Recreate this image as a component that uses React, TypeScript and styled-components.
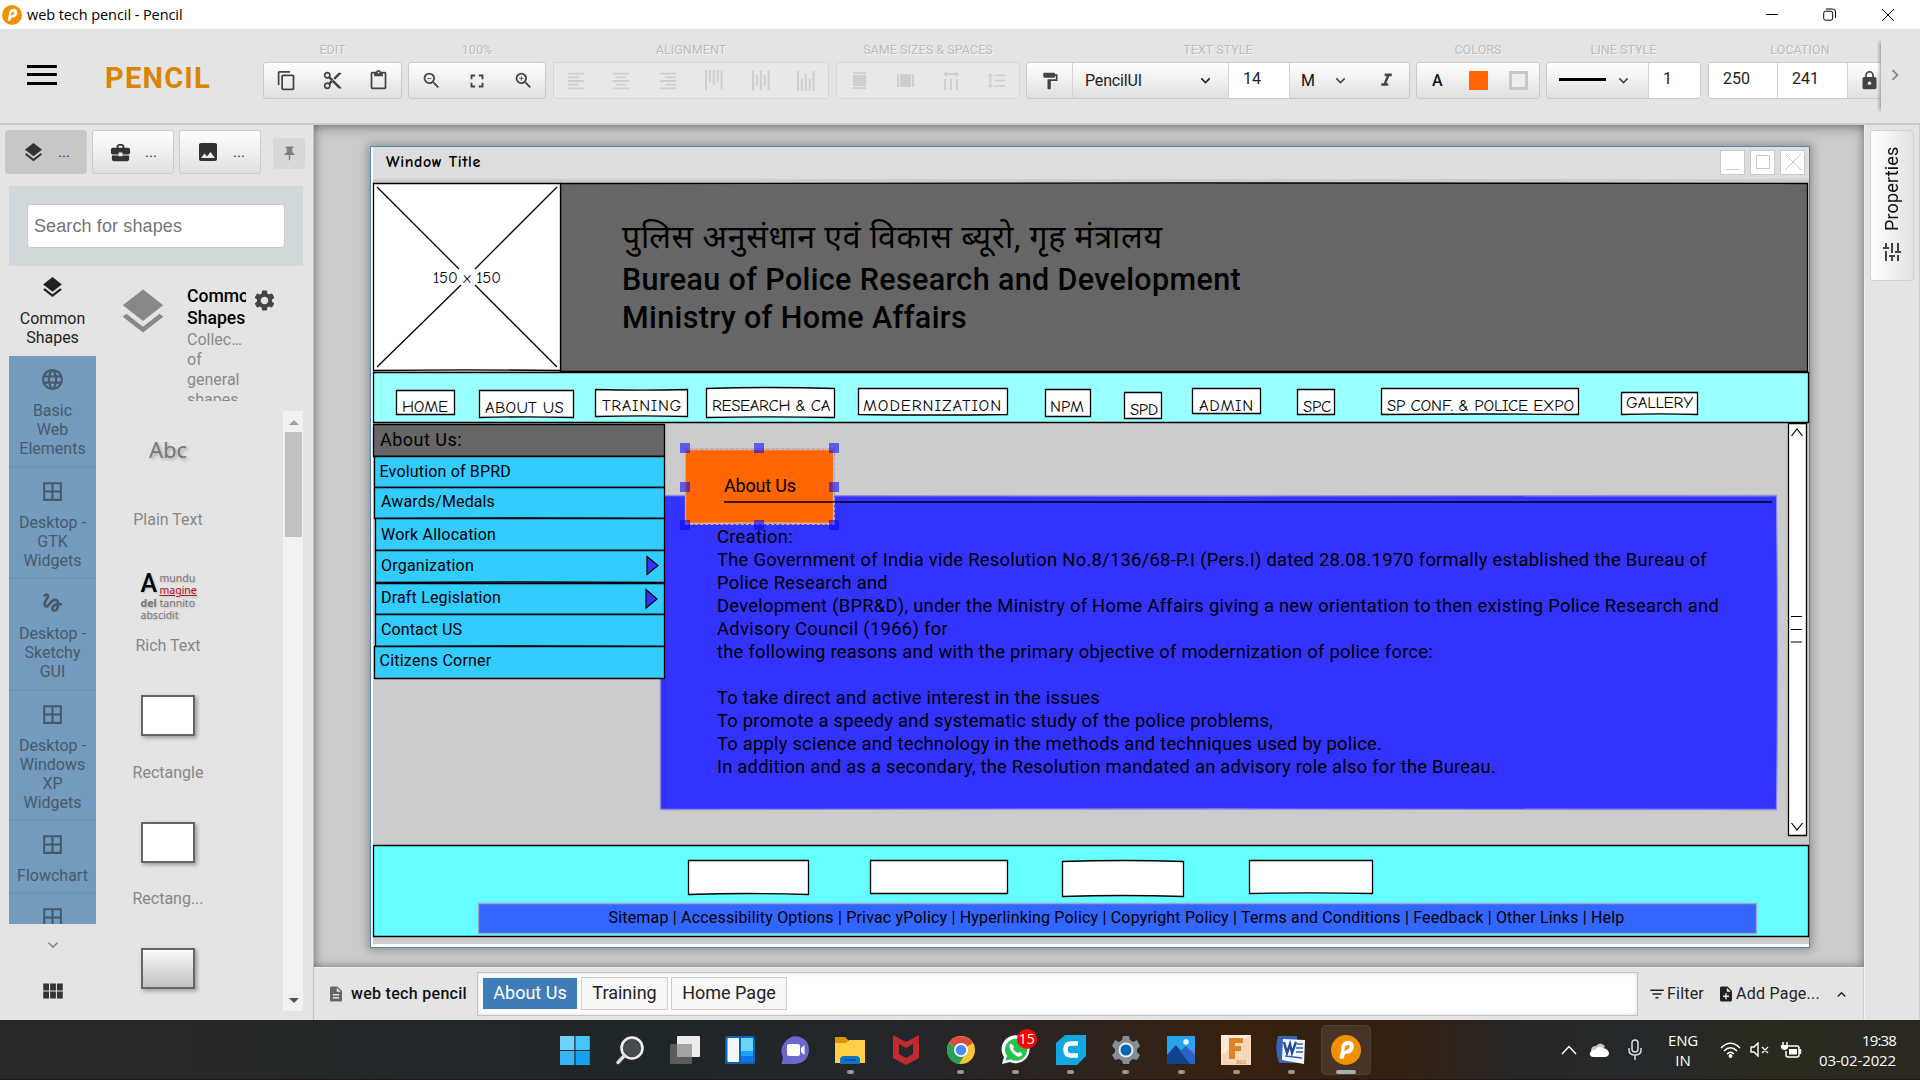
import React, { useLayoutEffect, useRef, useState } from "react";
import styled, { createGlobalStyle, css } from "styled-components";
import {
  MdLayers, MdContentCopy, MdContentCut, MdContentPaste, MdZoomOut, MdZoomIn, MdFullscreen,
  MdFormatAlignLeft, MdFormatAlignCenter, MdFormatAlignRight, MdFormatPaint, MdExpandMore, MdExpandLess,
  MdChevronRight, MdFormatItalic, MdLock, MdBusinessCenter, MdImage, MdPushPin, MdSettings, MdLanguage,
  MdBorderAll, MdGesture, MdViewModule, MdDescription, MdFilterList, MdNoteAdd, MdTune, MdFormatLineSpacing,
} from "react-icons/md";

const ui = `Roboto, "Noto Sans", sans-serif`;
const hand = `"Comic Sans MS", "Comic Neue", Lato, sans-serif`;
const system = `"Segoe UI", "Open Sans", "Noto Sans", sans-serif`;

const Global = createGlobalStyle`
  * { box-sizing: border-box; }
  body { margin: 0; background: #e4e4e4; font-family: ${ui}; color: #222; overflow: hidden; }
  svg { display: block; flex: none; }
`;

const Screen = styled.div`
  width: 1920px;
  height: 1080px;
  display: flex;
  flex-direction: column;
  background: #e4e4e4;
`;

/* ---------- text that keeps a stored width ---------- */
const FitSpan = styled.span`
  display: inline-block;
  white-space: pre;
`;

function Fit({ text, width }: { text: string; width: number }) {
  const ref = useRef<HTMLSpanElement>(null);
  const [gap, setGap] = useState(0);
  useLayoutEffect(() => {
    const natural = ref.current!.getBoundingClientRect().width;
    setGap((width - natural) / Array.from(text).length);
  }, [text, width]);
  return <FitSpan ref={ref} style={{ letterSpacing: gap }}>{text}</FitSpan>;
}

/* ---------- title bar ---------- */
const TitleBar = styled.header`
  height: 29px;
  flex: none;
  background: #fff;
  display: flex;
  align-items: center;
  padding: 0 25px 0 2px;
  font: 14.5px/28px ${system};
  color: #000;
`;
const TitleText = styled.div`
  margin-left: 5px;
  flex: 1;
`;
const WindowControls = styled.div`
  display: flex;
  gap: 44px;
`;

function PencilLogo({ size }: { size: number }) {
  return (
    <svg width={size} height={size} viewBox="0 0 30 30">
      <circle cx="15" cy="15" r="15" fill="#f29100" />
      <path d="M8.500 23 L10.500 14 Q10 9 13 7 Q19 4 22 8 Q24.500 13 20.500 17 Q18 19.500 14 19 L12.800 23 Q10.500 25 8.500 23Z" fill="#fff" />
      <path d="M14.200 11.500 Q17.500 9 18.500 11 Q18.800 14.500 13.200 16Z" fill="#f29100" />
    </svg>
  );
}

/* ---------- toolbar ---------- */
const Toolbar = styled.div`
  height: 96px;
  flex: none;
  display: flex;
  border-bottom: 2px solid #cbcbcb;
  padding-left: 27px;
`;
const Brand = styled.div`
  margin-left: 48px;
  width: 158px;
  padding-top: 31px;
  font: 700 29px/37px ${ui};
  color: #d98500;
`;
const Burger = styled.div`
  width: 30px;
  height: 20px;
  margin-top: 36px;
  border-top: 3px solid #000;
  border-bottom: 3px solid #000;
  padding-top: 5px;
  &::after { content: ""; display: block; height: 3px; background: #000; }
`;
const Groups = styled.div`
  display: flex;
  width: 1618px;
  margin-top: 11px;
  height: 73px;
  overflow: hidden;
`;
const Group = styled.section<{ $w: number; $gap: number }>`
  width: ${(p) => p.$w}px;
  margin-right: ${(p) => p.$gap}px;
  flex: none;
`;
const GroupLabel = styled.div`
  height: 22px;
  font: 12.6px/20px ${ui};
  text-align: center;
  color: #bcbcbc;
  text-shadow: 1px 1px 0 #f6f6f6;
`;
const GroupBox = styled.div<{ $off?: boolean }>`
  display: flex;
  height: 37px;
  border: 1px solid ${(p) => (p.$off ? "#d6d6d6" : "#cacaca")};
  border-radius: 3px;
  background: ${(p) => (p.$off ? "#e8e8e8" : "linear-gradient(#fff, #e0e0e0)")};
  color: ${(p) => (p.$off ? "#cfcfcf" : "#444")};
  overflow: hidden;
`;
const Cell = styled.div<{ $w?: number; $field?: boolean; $line?: boolean; $bold?: boolean }>`
  ${(p) => (p.$w ? `width: ${p.$w}px; flex: none;` : "flex: 1;")}
  display: flex;
  align-items: center;
  justify-content: center;
  font: ${(p) => (p.$bold ? 500 : 400)} 16px/1 ${ui};
  color: inherit;
  ${(p) => p.$field && css`background: #fff; color: #222; padding-bottom: 3px;`}
  ${(p) => p.$line && css`border-left: 1px solid #d2d2d2;`}
`;
const FontCell = styled(Cell)`
  justify-content: space-between;
  padding: 0 13px 0 12px;
  color: #222;
`;
const FieldText = styled(Cell)`
  justify-content: flex-start;
  padding-left: 14px;
`;
const Dark = styled.span`
  color: #111;
`;
const Swatch = styled.span<{ $fill?: string }>`
  width: 19px;
  height: 19px;
  background: ${(p) => p.$fill ?? "#eee"};
  border: ${(p) => (p.$fill ? "0" : "3px solid #c8c8c8")};
`;
const Stroke = styled.span`
  width: 47px;
  height: 3px;
  background: #000;
  margin: 0 8px 2px -4px;
`;
const MoreTools = styled.div`
  width: 39px;
  margin-top: 11px;
  height: 72px;
  padding: 24px 0 0 3px;
  color: #888;
  box-shadow: -3px 0 4px -2px rgba(0, 0, 0, 0.4);
  clip-path: inset(0 0 0 -4px);
`;

function Bars({ kind }: { kind: "top" | "middle" | "bottom" }) {
  const heights = { top: [20, 12, 15, 12, 20], middle: [20, 11, 20, 11, 20], bottom: [20, 12, 17, 12, 20] }[kind];
  return (
    <svg width="18" height="21" viewBox="0 0 18 21" fill="currentColor">
      {heights.map((h, i) => {
        const y = kind === "top" ? 0 : kind === "middle" ? (21 - h) / 2 : 21 - h;
        return <rect key={i} x={i * 3.9} y={y} width="2" height={h} />;
      })}
    </svg>
  );
}

/* ---------- work area ---------- */
const Work = styled.main`
  flex: 1;
  min-height: 0;
  display: flex;
`;
const Side = styled.aside`
  width: 314px;
  flex: none;
  border-right: 1px solid #c2c2c2;
  padding: 5px 10px 0 9px;
  display: flex;
  flex-direction: column;
`;
const SideTabs = styled.div`
  display: flex;
  gap: 5px;
  margin-left: -4px;
  height: 56px;
  flex: none;
`;
const SideTab = styled.div<{ $on?: boolean }>`
  width: 82px;
  flex: none;
  height: 44px;
  display: flex;
  align-items: center;
  gap: 13px;
  padding-left: 16px;
  border: 1px solid #cacaca;
  border-radius: 3px;
  color: #333;
  font-size: 15px;
  background: ${(p) => (p.$on ? "#c7c7c7" : "linear-gradient(#fff, #e0e0e0)")};
`;
const PinButton = styled.div`
  width: 32px;
  flex: none;
  height: 31px;
  margin: 8px 0 0 7px;
  display: grid;
  place-items: center;
  border-radius: 3px;
  background: #d8d8d8;
  color: #808080;
`;
const SearchBand = styled.div`
  height: 80px;
  flex: none;
  background: #d2d9dc;
  padding: 18px 18px 18px;
`;
const SearchBox = styled.div`
  height: 44px;
  border: 1px solid #c8c8c8;
  border-radius: 4px;
  background: #fff;
  font: 18px/42px "Liberation Sans", Arial, sans-serif;
  color: #757575;
  padding-left: 6px;
`;
const Collections = styled.div`
  display: flex;
  flex: 1;
  min-height: 0;
`;
const TabColumn = styled.div`
  width: 87px;
  display: flex;
  flex-direction: column;
  align-items: center;
`;
const TabList = styled.div`
  width: 87px;
  height: 658px;
  overflow: hidden;
`;
const CollectionTab = styled.div<{ $on?: boolean; $h: number }>`
  height: ${(p) => p.$h}px;
  display: flex;
  flex-direction: column;
  align-items: center;
  gap: 9px;
  padding-top: ${(p) => (p.$on ? 9 : 11)}px;
  font: 16px/19px ${ui};
  text-align: center;
  white-space: pre-line;
  color: ${(p) => (p.$on ? "#222" : "#475a6b")};
  background: ${(p) => (p.$on ? "transparent" : "#739bbe")};
  ${(p) => !p.$on && css`border-bottom: 2px solid #6d94b6;`}
`;
const ColumnIcon = styled.div<{ $h: number; $tone: string }>`
  height: ${(p) => p.$h}px;
  padding-left: 1px;
  display: grid;
  place-items: center;
  color: ${(p) => p.$tone};
`;
const ShapePane = styled.div`
  flex: 1;
  display: flex;
  flex-direction: column;
`;
const PaneHead = styled.div`
  height: 135px;
  padding: 19px 19px 0 20px;
  display: flex;
  overflow: hidden;
  color: #888;
`;
const PaneText = styled.div`
  width: 59px;
  height: 116px;
  flex: none;
  margin: 0 6px 0 17px;
  overflow: hidden;
  font: 16px/20px ${ui};
  white-space: pre;
  color: #8a8a8a;
`;
const PaneTitle = styled.div`
  font: 500 17.6px/22px ${ui};
  margin-bottom: 1px;
  color: #000;
`;
const GearHolder = styled.div`
  color: #444;
  padding-top: 3px;
`;
const ShapeScroller = styled.div`
  display: flex;
  margin-top: 10px;
  height: 600px;
`;
const ShapeList = styled.div`
  width: 144px;
  margin-right: 43px;
  display: flex;
  flex-direction: column;
  align-items: center;
  font: 16px/20px ${ui};
  color: #878787;
`;
const ShapeItem = styled.div<{ $h: number; $pic: number; $gap: number }>`
  height: ${(p) => p.$h}px;
  display: flex;
  flex-direction: column;
  align-items: center;
  & > :first-child { height: ${(p) => p.$pic}px; margin-bottom: ${(p) => p.$gap}px; flex: none; }
`;
const AbcThumb = styled.div`
  padding-top: 24px;
  font: 22px/28px "Noto Sans", sans-serif;
  color: #777;
  text-shadow: 2px 2px 3px #aaa;
`;
const RectThumb = styled.div<{ $shade?: boolean }>`
  width: 54px;
  border: 2px solid #666;
  background: ${(p) => (p.$shade ? "linear-gradient(#fafafa, #c0c0c0)" : "#fff")};
  box-shadow: 2px 2px 4px #999;
`;
const RichThumb = styled.div`
  width: 55px;
  display: grid;
  grid-template-columns: 19px 1fr;
  grid-auto-rows: 12.4px;
  margin-top: -1px;
  font: 10.5px/12px "Noto Sans", sans-serif;
  color: #777;
  text-shadow: 1px 1px 2px #bbb;
`;
const BigA = styled.b`
  grid-row: span 2;
  font: 500 25px/24px ${ui};
  color: #000;
`;
const Marked = styled.span`
  color: #b3121d;
  text-decoration: underline;
`;
const Wide = styled.span`
  grid-column: span 2;
`;
const ScrollTrack = styled.div`
  width: 20px;
  background: #f1f1f1;
  display: flex;
  flex-direction: column;
  align-items: center;
  justify-content: space-between;
  padding: 9px 0 8px 1px;
`;
const ScrollThumb = styled.div`
  width: 17px;
  height: 105px;
  margin: 7px 0 auto;
  background: #c1c1c1;
`;
const Arrow = styled.i<{ $down?: boolean }>`
  border: 5px solid transparent;
  ${(p) => (p.$down ? "border-top-color:#505050;border-bottom:0;" : "border-bottom-color:#a0a0a0;border-top:0;")}
`;

const Center = styled.div`
  width: 1550px;
  flex: none;
  display: flex;
  flex-direction: column;
`;
const Stage = styled.div`
  position: relative;
  height: 842px;
  flex: none;
  background: #cbcbcb;
  box-shadow: inset 0 8px 12px -5px rgba(0,0,0,.3), inset 6px 0 10px -4px rgba(0,0,0,.25),
    inset -6px 0 10px -4px rgba(0,0,0,.25), inset 0 -6px 10px -5px rgba(0,0,0,.25);
  overflow: hidden;
`;
/* origin of the free canvas; shapes keep their own coordinates relative to it */
const Paper = styled.div`
  position: absolute;
  left: 56px;
  top: 21px;
  width: 1440px;
  height: 802px;
  border: 1px solid #5286b4;
  background: #ccc;
  box-shadow: inset 2px -3px 0 #fff, 0 0 9px 2px rgba(0, 0, 0, 0.3);
`;
const PaperTitle = styled.div`
  height: 32px;
  margin-left: 2px;
  background: #ddd;
  display: flex;
  align-items: center;
  gap: 5px;
  padding: 0 4px 2px 13px;
  font: 700 16px/30px ${hand};
  color: #000;
`;
const Grow = styled.div`
  flex: 1;
`;
const MiniButton = styled.div`
  width: 25px;
  height: 25px;
  border: 1px solid #c9c9c9;
  background: #fff;
  display: grid;
  place-items: center;
`;
const ShapeFrame = styled.div<{ $x: number; $y: number; $w: number; $h: number }>`
  position: absolute;
  left: ${(p) => p.$x - 371}px;
  top: ${(p) => p.$y - 147}px;
  width: ${(p) => p.$w}px;
  height: ${(p) => p.$h}px;
  svg { overflow: visible; }
`;
const Note = styled.div<{ $x: number; $y: number; $size: number; $line?: number; $weight?: number; $hand?: boolean }>`
  position: absolute;
  left: ${(p) => p.$x - 371}px;
  top: ${(p) => p.$y - 147 - (p.$line ?? 20) / 2}px;
  font: ${(p) => p.$weight ?? 400} ${(p) => p.$size}px/${(p) => p.$line ?? 20}px ${(p) => (p.$hand ? hand : ui)};
  color: #000;
  white-space: pre;
`;
const Handle = styled.i<{ $x: number; $y: number }>`
  position: absolute;
  left: ${(p) => p.$x - 371 - 5}px;
  top: ${(p) => p.$y - 147 - 5}px;
  width: 10px;
  height: 10px;
  background: rgba(0, 0, 255, 0.55);
`;
const Selection = styled.div`
  position: absolute;
  left: 314px;
  top: 301px;
  width: 150px;
  height: 77px;
  border: 1px dashed #a9a9e6;
`;

type Box = { x: number; y: number; x2: number; y2: number; fill: string; stroke?: string; top?: number; bottom?: number; right?: number };
function Sketch({ x, y, x2, y2, fill, stroke = "#000", top = 0, bottom = 0, right = 0 }: Box) {
  const w = x2 - x;
  const h = y2 - y;
  return (
    <ShapeFrame $x={x} $y={y} $w={w} $h={h}>
      <svg width={w} height={h}>
        <path
          d={`M.5 .5 Q${w / 2} ${0.5 + top * 2} ${w - 0.5} .5 Q${w - 0.5 + right * 2} ${h / 2} ${w - 0.5} ${h - 0.5} Q${w / 2} ${h - 0.5 + bottom * 2} .5 ${h - 0.5}Z`}
          fill={fill} stroke={stroke} strokeWidth="1.3"
        />
      </svg>
    </ShapeFrame>
  );
}

const menu: [string, number, number, number, number, number, number, number, number, number][] = [
  ["HOME", 396, 390, 455, 415, 402, 46, 407, 0, 0],
  ["ABOUT US", 479, 390, 574, 418, 485, 79, 408, 0, -0.6],
  ["TRAINING", 595, 389, 688, 417, 602, 80, 406, 0.6, -0.6],
  ["RESEARCH & CA", 706, 388, 835, 418, 712, 118, 406, -1, -0.6],
  ["MODERNIZATION", 858, 388, 1008, 415, 863, 139, 406, 0, 0.5],
  ["NPM", 1045, 389, 1091, 417, 1050, 34, 407, 0, 0],
  ["SPD", 1124, 392, 1162, 419, 1130, 28, 410, 0, 0],
  ["ADMIN", 1192, 388, 1261, 414, 1199, 55, 406, 0, 0],
  ["SPC", 1297, 389, 1335, 415, 1303, 28, 407, 0, 0],
  ["SP CONF. & POLICE EXPO", 1381, 388, 1579, 415, 1387, 187, 406, 0, -0.5],
  ["GALLERY", 1621, 392, 1698, 415, 1626, 67, 403, 0, -0.6],
];
const links: [string, number, number, number, number, number, number][] = [
  ["Evolution of BPRD", 374, 456, 488, 379.5, 131.5, 472],
  ["Awards/Medals", 374, 487, 519, 381, 114, 502],
  ["Work Allocation", 375, 518, 551, 381, 115, 535],
  ["Organization", 375, 550, 583, 381, 93, 566],
  ["Draft Legislation", 375, 583, 615, 381, 120, 598],
  ["Contact US", 375, 614, 647, 381, 81, 630],
  ["Citizens Corner", 374, 646, 679, 379.5, 112, 661],
];
const article: [string, number, number][] = [
  ["Creation:", 536, 76],
  ["The Government of India vide Resolution No.8/136/68-P.I (Pers.I) dated 28.08.1970 formally established the Bureau of", 559, 990],
  ["Police Research and", 582, 171],
  ["Development (BPR&D), under the Ministry of Home Affairs giving a new orientation to then existing Police Research and", 605, 1002],
  ["Advisory Council (1966) for", 628, 231],
  ["the following reasons and with the primary objective of modernization of police force:", 651, 716],
  ["To take direct and active interest in the issues", 697, 383],
  ["To promote a speedy and systematic study of the police problems,", 720, 556],
  ["To apply science and technology in the methods and techniques used by police.", 743, 665],
  ["In addition and as a secondary, the Resolution mandated an advisory role also for the Bureau.", 766, 779],
];
const footerBoxes: [number, number, number, number, number, number][] = [
  [688, 860, 809, 895, 0, -1], [870, 860, 1008, 894, 0, 0], [1062, 861, 1184, 897, -1, -1], [1249, 860, 1373, 894, 0, -0.6],
];

function Mockup() {
  return (
    <Paper>
      <PaperTitle>
        <Fit text="Window Title" width={95} />
        <Grow />
        <MiniButton><svg width="14" height="16"><path d="M0 15.500H13" stroke="#c9c9c9" /></svg></MiniButton>
        <MiniButton><svg width="14" height="14"><rect x=".5" y=".5" width="13" height="13" fill="none" stroke="#c9c9c9" /></svg></MiniButton>
        <MiniButton><svg width="16" height="16"><path d="M0 0L16 16M16 0L0 16" stroke="#c9c9c9" /></svg></MiniButton>
      </PaperTitle>

      <Sketch x={560} y={183} x2={1808} y2={372} fill="#666" top={-0.6} />
      <Sketch x={373} y={183} x2={561} y2={371} fill="#fff" bottom={-0.6} />
      <ShapeFrame $x={377} $y={187} $w={180} $h={180}>
        <svg width="180" height="180"><path d="M0 0L82 82M98 98L180 180M180 0L98 82M84 98L0 180" stroke="#000" strokeWidth="1.300" /></svg>
      </ShapeFrame>
      <Note $x={433} $y={278} $size={16} $hand><Fit text="150 x 150" width={68} /></Note>
      <Note $x={622} $y={237} $size={32} $line={44}><Fit text="पुलिस अनुसंधान एवं विकास ब्यूरो, गृह मंत्रालय" width={552} /></Note>
      <Note $x={622} $y={280} $size={30.5} $line={38} $weight={500}><Fit text="Bureau of Police Research and Development" width={619} /></Note>
      <Note $x={622} $y={318} $size={30.5} $line={38} $weight={500}><Fit text="Ministry of Home Affairs" width={345} /></Note>

      <Sketch x={373} y={372} x2={1809} y2={423} fill="#99ffff" />
      {menu.map(([t, x, y, x2, y2, tx, tw, ty, top, bottom]) => (
        <React.Fragment key={t}>
          <Sketch x={x} y={y} x2={x2} y2={y2} fill="#fff" top={top} bottom={bottom} />
          <Note $x={tx} $y={ty} $size={16.6} $hand><Fit text={t} width={tw} /></Note>
        </React.Fragment>
      ))}

      <Sketch x={660} y={495} x2={1777} y2={810} fill="#3333ff" stroke="#8c8ce8" top={0.5} bottom={-0.5} right={1} />
      <Sketch x={373} y={424} x2={665} y2={457} fill="#666" />
      <Note $x={380} $y={439.5} $size={18}><Fit text="About Us:" width={82} /></Note>
      {links.map(([t, x, y, y2, tx, tw, ty], i) => (
        <React.Fragment key={t}>
          <Sketch x={x} y={y} x2={665} y2={y2} fill="#33ccff" bottom={i % 2 ? -0.5 : 0} />
          <Note $x={tx} $y={ty} $size={16}><Fit text={t} width={tw} /></Note>
        </React.Fragment>
      ))}
      <ShapeFrame $x={646} $y={556} $w={13} $h={20}>
        <svg width="13" height="20"><path d="M1 .5L12 9.500L1 18.500Z" fill="#3333ff" stroke="#000" strokeWidth="1.200" /></svg>
      </ShapeFrame>
      <ShapeFrame $x={645} $y={589} $w={13} $h={20}>
        <svg width="13" height="20"><path d="M1 .5L12 10L1 19Z" fill="#3333ff" stroke="#000" strokeWidth="1.200" /></svg>
      </ShapeFrame>

      <Sketch x={685} y={449} x2={834} y2={524} fill="#ff6600" stroke="#ddb193" bottom={-0.5} />
      <Note $x={724} $y={486} $size={18}><Fit text="About Us" width={72} /></Note>
      <ShapeFrame $x={724} $y={501} $w={1048} $h={2}>
        <svg width="1048" height="2"><path d="M0 1H1048" stroke="#000" strokeWidth="1.500" /></svg>
      </ShapeFrame>
      {article.map(([t, y, w]) => (
        <Note key={y} $x={717} $y={y} $size={18.4} $line={23}><Fit text={t} width={w} /></Note>
      ))}
      <Selection />
      {[684.5, 759, 834].flatMap((x) => [448, 487, 524.5].filter((y) => x !== 759 || y !== 487).map((y) => <Handle key={`${x}-${y}`} $x={x} $y={y} />))}

      <Sketch x={1788} y={423} x2={1807} y2={836} fill="#fff" />
      <ShapeFrame $x={1791} $y={428} $w={12} $h={403}>
        <svg width="12" height="403" fill="none" stroke="#000" strokeWidth="1.200">
          <path d="M.5 8L6 1L11.500 8M.5 395L6 402L11.500 395M0 188.500H11M0 201.500H11M0 214H11" />
        </svg>
      </ShapeFrame>

      <Sketch x={373} y={845} x2={1809} y2={937} fill="#66ffff" />
      {footerBoxes.map(([x, y, x2, y2, top, bottom]) => (
        <Sketch key={x} x={x} y={y} x2={x2} y2={y2} fill="#fff" top={top} bottom={bottom} />
      ))}
      <Sketch x={478} y={903} x2={1757} y2={934} fill="#3366ff" stroke="#9aa5c8" />
      <Note $x={608.5} $y={917.5} $size={16}>
        <Fit text="Sitemap | Accessibility Options | Privac yPolicy | Hyperlinking Policy | Copyright Policy | Terms and Conditions | Feedback | Other Links | Help" width={1016} />
      </Note>
    </Paper>
  );
}

/* ---------- page bar ---------- */
const PageBar = styled.div`
  flex: 1;
  display: flex;
  align-items: center;
  border-top: 1px solid #eee;
  border-right: 1px solid #cfcfcf;
  padding: 0 0 0 13px;
  font: 16px/20px ${ui};
  color: #222;
`;
const DocName = styled.div`
  display: flex;
  align-items: center;
  gap: 6px;
  width: 150px;
  font-weight: 500;
  color: #111;
  svg { color: #666; }
`;
const PageTabs = styled.div`
  width: 1161px;
  height: 44px;
  margin-bottom: 1px;
  background: #fff;
  border: 1px solid #c2c2c2;
  box-shadow: inset 0 0 5px #ddd;
  display: flex;
  align-items: flex-start;
  gap: 3px;
  padding: 4px;
`;
const PageTab = styled.div<{ $w: number; $on?: boolean }>`
  width: ${(p) => p.$w}px;
  height: 33px;
  font: 18px/29px ${ui};
  text-align: center;
  border: 1px solid ${(p) => (p.$on ? "#f4f4f4" : "#ccc")};
  background: ${(p) => (p.$on ? "#3f7db8" : "#f7f7f7")};
  color: ${(p) => (p.$on ? "#fff" : "#222")};
`;
const PageAction = styled.div<{ $ml: number }>`
  display: flex;
  align-items: center;
  margin-left: ${(p) => p.$ml}px;
  gap: 1px;
`;

const RightRail = styled.aside`
  width: 56px;
  padding: 5px 0 0 5px;
  border-left: 1px solid #f0f0f0;
  border-right: 1px solid #cfcfcf;
`;
const PropertiesTab = styled.div`
  width: 44px;
  height: 151px;
  border: 1px solid #d2d2d2;
  border-radius: 3px;
  background: linear-gradient(270deg, #fff, #e2e2e2);
  writing-mode: vertical-rl;
  transform: rotate(180deg);
  display: flex;
  align-items: center;
  justify-content: flex-start;
  gap: 9px;
  padding-top: 16px;
  font: 18px/22px ${ui};
  letter-spacing: 0.15px;
  color: #111;
  svg { color: #444; }
`;

/* ---------- taskbar ---------- */
const Taskbar = styled.footer`
  height: 60px;
  flex: none;
  display: flex;
  background: linear-gradient(90deg, #292828, #1f2628 34%, #24262a 47%, #2a2422 54%, #37210f 64%, #332013 73%, #262626 79%, #25282a 85%, #2a2a1e 92%, #2a2821);
  border-bottom: 1px solid #211616;
  padding: 0 24px 0 550px;
`;
const AppSlot = styled.div<{ $active?: boolean; $running?: boolean }>`
  position: relative;
  width: 50px;
  height: 50px;
  flex: none;
  margin: 5px 5.1px 5px 0;
  border-radius: 5px;
  display: grid;
  place-items: center;
  ${(p) => p.$active && css`background: rgba(255,255,255,.09); border: 1px solid rgba(255,255,255,.06);`}
  &::after {
    content: "";
    display: ${(p) => (p.$running ? "block" : "none")};
    position: absolute;
    bottom: ${(p) => (p.$active ? 0 : 1)}px;
    left: calc(50% - ${(p) => (p.$active ? 10 : 3.5)}px);
    width: ${(p) => (p.$active ? 20 : 7)}px;
    height: 4px;
    border-radius: 2px;
    background: ${(p) => (p.$active ? "#a0b2b8" : "#9a9793")};
  }
`;
const Badge = styled.b`
  position: absolute;
  left: 26px;
  top: 4px;
  width: 20px;
  height: 20px;
  border-radius: 50%;
  background: #f00;
  color: #fff;
  font: 14px/20px ${system};
  text-align: center;
`;
const Tray = styled.div`
  flex: 1;
  display: flex;
  align-items: center;
  justify-content: flex-end;
  color: #fff;
  font: 15px/20px ${system};
`;
const TrayItem = styled.div<{ $mr: number }>`
  margin-right: ${(p) => p.$mr}px;
  text-align: center;
`;
const Clock = styled.div`
  text-align: right;
`;

const apps: { id: string; art: React.ReactNode; running?: boolean; active?: boolean; badge?: string }[] = [
  { id: "start", art: <><rect x="0" y="1" width="14.300" height="14" fill="#6fd3fb" /><rect x="15.500" y="1" width="14.300" height="14" fill="#44c5fb" /><rect x="0" y="16" width="14.300" height="14" fill="#35b6f8" /><rect x="15.500" y="16" width="14.300" height="14" fill="#16a0f5" /></> },
  { id: "search", art: <><circle cx="17" cy="13" r="10.500" fill="#474b4d" stroke="#eee" strokeWidth="2.600" /><path d="M9.500 20.500L3 27.500" stroke="#ddd" strokeWidth="3.400" strokeLinecap="round" /></> },
  { id: "tasks", art: <><rect x="0" y="9" width="22" height="20" rx="1" fill="#5e5c5b" /><rect x="7" y="1" width="23" height="21" rx="1" fill="#ececec" /><rect x="7" y="9" width="15" height="13" fill="#a3a3a3" /></> },
  { id: "widgets", art: <><rect x="0" y="1" width="30" height="28" rx="1.500" fill="#0c64b4" /><rect x="2.500" y="3" width="11.500" height="24" rx="1" fill="#f4f6f8" /><rect x="16" y="3" width="12" height="13" fill="#69d5ff" /><rect x="16" y="16" width="12" height="5" fill="#1da3f5" /><rect x="16" y="21" width="12" height="6" fill="#0a78e0" /></> },
  { id: "chat", art: <><path d="M1.500 29L3 23Q-1 14 5 7Q11-1 20 2Q29 5 29 15Q28 28 15 29Z" fill="#6c67cc" /><rect x="7" y="9" width="13" height="12" rx="2" fill="#fff" /><path d="M21 13L24.500 10V20L21 17Z" fill="#fff" /></> },
  { id: "files", running: true, art: <><path d="M0 2H10L13 5V10H0Z" fill="#d99600" /><path d="M0 8L11 8L14 5H30V28H0Z" fill="#ffcf48" /><path d="M5 29V25Q5 21 9 21H21Q25 21 25 25V29Z" fill="#1173c8" /><path d="M9 25H21" stroke="#0b4c90" strokeWidth="1.500" /></> },
  { id: "shield", art: <path d="M2 0L15 7L28 0V23L15 30L2 23ZM8 9V19L15 23L22 19V9L15 13Z" fill="#c02a31" fillRule="evenodd" /> },
  { id: "browser", running: true, art: <><circle cx="15" cy="15" r="14" fill="#f8c634" /><path d="M15 15L3 8A14 14 0 0 1 27 8Z" fill="#e0493a" /><path d="M15 15L3 8A14 14 0 0 0 13 29L20 18Z" fill="#27a259" /><circle cx="15" cy="15" r="7" fill="#fff" /><circle cx="15" cy="15" r="5.300" fill="#4a8df5" /></> },
  { id: "messages", running: true, badge: "15", art: <><path d="M1 29L3 22A14 14 0 1 1 9 27Z" fill="#fff" /><path d="M4.500 25.500L6 21A11 11 0 1 1 10 24.500Z" fill="#28c04f" /><path d="M9 9Q11 8 13 12L12 14Q14 17 17 18L19 17Q22 19 21 20Q18 24 13 19Q7 13 9 9Z" fill="#fff" /></> },
  { id: "cutter", running: true, art: <><path d="M9 0H30V21L21 30H0V8Z" fill="#10a7e3" /><path d="M22 8.500H15Q9.500 8.500 9.500 14.500T15 20.500H22" fill="none" stroke="#fff" strokeWidth="4.500" /></> },
  { id: "settings", running: true, art: <><path d="M12 1H18L19 5L22 7L26 5L29 11L26 14V17L29 20L26 25L22 24L19 26L18 29H12L11 26L8 24L4 25L1 20L4 17V14L1 11L4 5L8 7L11 5Z" fill="#858d95" /><circle cx="15" cy="15" r="7.500" fill="#e8edf1" /><circle cx="15" cy="15" r="5.500" fill="#0964b0" /></> },
  { id: "photos", running: true, art: <><rect x="1" y="1" width="28" height="28" rx="1" fill="#26a4ef" /><path d="M29 14L24 14L14 29H29Z" fill="#5b7fe0" /><path d="M1 20L10 10L25 29H1Z" fill="#11428c" /><path d="M14 16L20 11L29 20V29H24Z" fill="#2c63c4" /><circle cx="20" cy="7" r="2.700" fill="#fff" /></> },
  { id: "cad", running: true, art: <><rect width="30" height="30" fill="#f8d7b9" /><path d="M0 0H30L0 20Z" fill="#fbe8d6" /><path d="M8 3H22V8H14V11H20V16H14V24H8Z" fill="#df8426" /><text x="15" y="28.500" fontSize="6" fill="#d67b2b" fontFamily="Roboto">360</text></> },
  { id: "writer", running: true, art: <><path d="M2 1H21V28H3Q-2 14 2 1Z" fill="#3964b8" /><path d="M7 4L29 5L28 29L6 25Z" fill="#f5f8fd" /><path d="M8 7L11 18L14 9L16 18L20 7" stroke="#244b9c" strokeWidth="2.400" fill="none" /><path d="M21 9H27M20 13H27M20 17H27M9 21L26 23" stroke="#3561b1" strokeWidth="1.600" /></> },
];

export default function App() {
  return (
    <Screen>
      <Global />
      <TitleBar>
        <PencilLogo size={20} />
        <TitleText><Fit text="web tech pencil - Pencil" width={155.5} /></TitleText>
        <WindowControls>
          <svg width="13" height="13"><path d="M0 6.500H12" stroke="#000" /></svg>
          <svg width="14" height="14" fill="none" stroke="#000"><rect x=".7" y="3.200" width="9" height="9" rx="2" /><path d="M3 1H9.500Q12.500 1 12.500 4V10" /></svg>
          <svg width="14" height="14" stroke="#000"><path d="M1 1L13 13M13 1L1 13" /></svg>
        </WindowControls>
      </TitleBar>

      <Toolbar>
        <Burger />
        <Brand><Fit text="PENCIL" width={106} /></Brand>
        <Groups>
          <Group $w={139} $gap={6}>
            <GroupLabel>EDIT</GroupLabel>
            <GroupBox><Cell><MdContentCopy size={21} /></Cell><Cell><MdContentCut size={21} /></Cell><Cell><MdContentPaste size={21} /></Cell></GroupBox>
          </Group>
          <Group $w={138} $gap={7}>
            <GroupLabel>100%</GroupLabel>
            <GroupBox><Cell $w={44}><MdZoomOut size={21} /></Cell><Cell><MdFullscreen size={22} /></Cell><Cell $w={44}><MdZoomIn size={21} /></Cell></GroupBox>
          </Group>
          <Group $w={276} $gap={7}>
            <GroupLabel>ALIGNMENT</GroupLabel>
            <GroupBox $off>
              <Cell $w={44}><MdFormatAlignLeft size={22} /></Cell><Cell><MdFormatAlignCenter size={22} /></Cell><Cell><MdFormatAlignRight size={22} /></Cell>
              <Cell><Bars kind="top" /></Cell><Cell><Bars kind="middle" /></Cell><Cell $w={44}><Bars kind="bottom" /></Cell>
            </GroupBox>
          </Group>
          <Group $w={184} $gap={6}>
            <GroupLabel>SAME SIZES &amp; SPACES</GroupLabel>
            <GroupBox $off>
              <Cell><svg width="13" height="17" fill="currentColor"><path d="M0 0H13V2H0ZM0 3H13V14H0ZM0 15H13V17H0Z" /></svg></Cell>
              <Cell><svg width="17" height="13" fill="currentColor"><path d="M0 0H2V13H0ZM3 0H14V13H3ZM15 0H17V13H15Z" /></svg></Cell>
              <Cell><svg width="16" height="19" fill="currentColor"><path d="M0 3L4 0V2H12V0L16 3L12 6V4H4V6ZM1 8H3V19H1ZM7 8H9V19H7ZM13 8H15V19H13Z" /></svg></Cell>
              <Cell><MdFormatLineSpacing size={21} /></Cell>
            </GroupBox>
          </Group>
          <Group $w={384} $gap={6}>
            <GroupLabel>TEXT STYLE</GroupLabel>
            <GroupBox>
              <Cell $w={45}><MdFormatPaint size={20} /></Cell>
              <FontCell $w={156} $line><Fit text="PencilUI" width={57} /><MdExpandMore size={19} /></FontCell>
              <FieldText $w={61} $field $line>14</FieldText>
              <Cell $w={37} $line><Dark>M</Dark></Cell>
              <Cell $w={29}><MdExpandMore size={19} /></Cell>
              <Cell><MdFormatItalic size={21} transform="translate(4 0)" /></Cell>
            </GroupBox>
          </Group>
          <Group $w={124} $gap={6}>
            <GroupLabel>COLORS</GroupLabel>
            <GroupBox><Cell $bold><Dark>A</Dark></Cell><Cell><Swatch $fill="#ff6600" /></Cell><Cell><Swatch /></Cell></GroupBox>
          </Group>
          <Group $w={155} $gap={7}>
            <GroupLabel>LINE STYLE</GroupLabel>
            <GroupBox><Cell $w={101}><Stroke /><MdExpandMore size={19} /></Cell><FieldText $field $line>1</FieldText></GroupBox>
          </Group>
          <Group $w={184} $gap={0}>
            <GroupLabel>LOCATION</GroupLabel>
            <GroupBox><FieldText $w={68} $field>250</FieldText><FieldText $w={70} $field $line>241</FieldText><Cell $line><MdLock size={21} /></Cell></GroupBox>
          </Group>
        </Groups>
        <MoreTools><MdChevronRight size={22} /></MoreTools>
      </Toolbar>

      <Work>
        <Side>
          <SideTabs>
            <SideTab $on><MdLayers size={23} />...</SideTab>
            <SideTab><MdBusinessCenter size={23} />...</SideTab>
            <SideTab><MdImage size={24} />...</SideTab>
            <PinButton><MdPushPin size={17} /></PinButton>
          </SideTabs>
          <SearchBand><SearchBox><Fit text="Search for shapes" width={148} /></SearchBox></SearchBand>
          <Collections>
            <TabColumn>
              <TabList>
                <CollectionTab $on $h={90}><MdLayers size={25} />{"Common\nShapes"}</CollectionTab>
                <CollectionTab $h={112}><MdLanguage size={25} />{"Basic\nWeb\nElements"}</CollectionTab>
                <CollectionTab $h={111}><MdBorderAll size={25} />{"Desktop -\nGTK\nWidgets"}</CollectionTab>
                <CollectionTab $h={112}><MdGesture size={25} />{"Desktop -\nSketchy\nGUI"}</CollectionTab>
                <CollectionTab $h={130}><MdBorderAll size={25} />{"Desktop -\nWindows\nXP\nWidgets"}</CollectionTab>
                <CollectionTab $h={73}><MdBorderAll size={25} />Flowchart</CollectionTab>
                <CollectionTab $h={73}><MdBorderAll size={25} /></CollectionTab>
              </TabList>
              <ColumnIcon $h={42} $tone="#888"><MdExpandMore size={20} /></ColumnIcon>
              <ColumnIcon $h={50} $tone="#333"><MdViewModule size={26} /></ColumnIcon>
            </TabColumn>
            <ShapePane>
              <PaneHead>
                <MdLayers size={54} />
                <PaneText><PaneTitle>{"Common\nShapes"}</PaneTitle>{"Collec…\nof\ngeneral\nshapes"}</PaneText>
                <GearHolder><MdSettings size={25} /></GearHolder>
              </PaneHead>
              <ShapeScroller>
                <ShapeList>
                  <ShapeItem $h={162} $pic={53} $gap={46}><AbcThumb>Abc</AbcThumb>Plain Text</ShapeItem>
                  <ShapeItem $h={122} $pic={50} $gap={14}><RichThumb><BigA>A</BigA><span>mundu</span><Marked>magine</Marked><b>del</b><span>tannito</span><Wide>abscidit</Wide></RichThumb>Rich Text</ShapeItem>
                  <ShapeItem $h={127} $pic={41} $gap={27}><RectThumb />Rectangle</ShapeItem>
                  <ShapeItem $h={126} $pic={41} $gap={26}><RectThumb />Rectang...</ShapeItem>
                  <ShapeItem $h={45} $pic={41} $gap={0}><RectThumb $shade /></ShapeItem>
                </ShapeList>
                <ScrollTrack><Arrow /><ScrollThumb /><Arrow $down /></ScrollTrack>
              </ShapeScroller>
            </ShapePane>
          </Collections>
        </Side>

        <Center>
          <Stage><Mockup /></Stage>
          <PageBar>
            <DocName><MdDescription size={18} /><Fit text="web tech pencil" width={116} /></DocName>
            <PageTabs>
              <PageTab $w={96} $on>About Us</PageTab>
              <PageTab $w={87}>Training</PageTab>
              <PageTab $w={116}>Home Page</PageTab>
            </PageTabs>
            <PageAction $ml={10}><MdFilterList size={18} /><Fit text="Filter" width={37} /></PageAction>
            <PageAction $ml={13}><MdNoteAdd size={18} /><Fit text="Add Page..." width={84} /></PageAction>
            <PageAction $ml={13}><MdExpandLess size={17} /></PageAction>
          </PageBar>
        </Center>

        <RightRail>
          <PropertiesTab><MdTune size={24} transform="rotate(90)" /><span>Properties</span></PropertiesTab>
        </RightRail>
      </Work>

      <Taskbar>
        {apps.map((a) => (
          <AppSlot key={a.id} $running={a.running}>
            <svg width="30" height="30" viewBox="0 0 30 30">{a.art}</svg>
            {a.badge && <Badge>{a.badge}</Badge>}
          </AppSlot>
        ))}
        <AppSlot $active $running><PencilLogo size={30} /></AppSlot>
        <Tray>
          <TrayItem $mr={12}><svg width="16" height="10" fill="none" stroke="#fff" strokeWidth="1.500"><path d="M1 9L8 1.500L15 9" /></svg></TrayItem>
          <TrayItem $mr={17}><svg width="21" height="14"><path d="M2 8Q2 3 7 3Q11-2 16 3L12 10Z" fill="#c8c8c8" /><path d="M4 14Q0 13 1 10Q2 7 6 7Q9 2 14 5Q20 6 20 11Q19 14 16 14Z" fill="#fff" /></svg></TrayItem>
          <TrayItem $mr={25}><svg width="16" height="21" fill="none" stroke="#d9dddd" strokeWidth="1.500"><rect x="5" y="1" width="6" height="12" rx="3" /><path d="M2 9V11Q2 16 8 16T14 11V9M8 16V21" /></svg></TrayItem>
          <TrayItem $mr={22}><Fit text="ENG" width={30} /><br />IN</TrayItem>
          <TrayItem $mr={9}><svg width="21" height="16" fill="none" stroke="#fff" strokeWidth="1.500"><path d="M1 6Q10.500-3.500 20 6M4 9Q10.500 2.500 17 9M7 12Q10.500 8.500 14 12" /><circle cx="10.500" cy="14" r="1.200" fill="#fff" /></svg></TrayItem>
          <TrayItem $mr={11}><svg width="20" height="15" fill="none" stroke="#fff" strokeWidth="1.400"><path d="M1 5H4L8 1V14L4 10H1ZM12 5L18 11M18 5L12 11" /></svg></TrayItem>
          <TrayItem $mr={17}><svg width="21" height="16" fill="none" stroke="#fff" strokeWidth="1.500"><path d="M7 4H16Q18 4 18 6V13Q18 15 16 15H7Q5 15 5 13V9M19.500 7V12M2 0V4M6 0V4" /><rect x="8" y="7" width="8" height="5.500" fill="#fff" stroke="none" /><path d="M0 3H7V6Q6 8 3.500 8T0 6Z" fill="#fff" stroke="none" /></svg></TrayItem>
          <Clock><Fit text="19:38" width={34} /><br /><Fit text="03-02-2022" width={77} /></Clock>
        </Tray>
      </Taskbar>
    </Screen>
  );
}
